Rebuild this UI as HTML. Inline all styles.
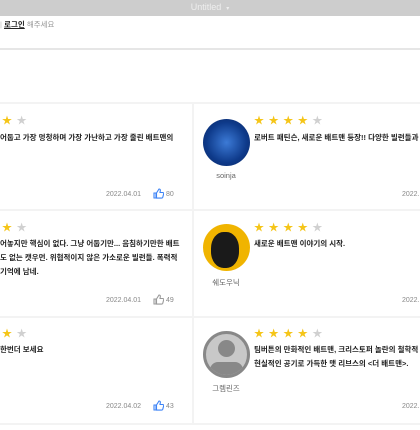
<!DOCTYPE html>
<html><head><meta charset="utf-8"><style>
*{margin:0;padding:0;box-sizing:border-box}
body{width:420px;height:430px;overflow:hidden;background:#fff;font-family:"Liberation Sans","Noto Sans CJK KR",sans-serif;position:relative}
.a{position:absolute;white-space:nowrap}
.bar{left:0;top:0;width:420px;height:16px;background:#cdcdcd;color:#eee;font-size:9px;text-align:center;line-height:14px}
.st{font-size:10px;letter-spacing:4.6px;color:#f5c518;line-height:12px}
.st i{font-style:normal;color:#d0d0d0}
.tx{font-size:7.5px;color:#222;font-weight:bold;line-height:14px}
.dt{font-size:7px;color:#888}
.nm{font-size:7.5px;color:#666;text-align:center;width:46px}
.hl{left:0;width:420px;height:2px;background:#f3f3f3}
.av{width:47px;height:47px;border-radius:50%;left:203px;overflow:hidden}
</style></head><body>
<div class="a bar">Untitled &nbsp;<span style="font-size:6px">▾</span></div>
<div class="a" style="left:0;top:19px;font-size:7.5px;color:#999"><span style="color:#bbb">|</span> <b style="color:#222;text-decoration:underline">로그인</b> 해주세요</div>
<div class="a" style="left:0;top:48px;width:420px;height:2px;background:#e6e6e6"></div>
<div class="a hl" style="top:102px"></div>
<div class="a hl" style="top:209px"></div>
<div class="a hl" style="top:316px"></div>
<div class="a hl" style="top:423px"></div>
<div class="a" style="left:192px;top:103px;width:2px;height:322px;background:#f3f3f3"></div>

<!-- row1 -->
<div class="a st" style="left:2px;top:116px">★<i>★</i></div>
<div class="a tx" style="left:0;top:131px">어둡고 가장 멍청하며 가장 가난하고 가장 줄린 배트맨의</div>
<div class="a dt" style="left:106px;top:191px">2022.04.01</div>
<svg class="a" style="left:153px;top:188px" width="11" height="11" viewBox="0 0 11 11"><path d="M1 5h2v5H1zM3.5 5L6 1c1 0 1.5.7 1.3 1.8L7 4.5h2.6c.8 0 1.3.6 1.1 1.3l-1 3.6c-.2.5-.6.7-1.1.7H3.5z" fill="none" stroke="#3b82f6" stroke-width="1.1"/></svg>
<div class="a dt" style="left:166px;top:191px">80</div>
<div class="a av" style="top:119px;background:radial-gradient(circle at 50% 50%,#3c7ad6,#0e3a8a 60%,#0a2560)"></div>
<div class="a nm" style="left:203px;top:171px">soinja</div>
<div class="a st" style="left:254px;top:116px">★★★★<i>★</i></div>
<div class="a tx" style="left:254px;top:131px">로버트 패틴슨, 새로운 배트맨 등장!! 다양한 빌런들과</div>
<div class="a dt" style="left:402px;top:191px">2022.</div>

<!-- row2 -->
<div class="a st" style="left:2px;top:223px">★<i>★</i></div>
<div class="a tx" style="left:0;top:237px">어놓지만 핵심이 없다. 그냥 어둡기만... 음침하기만한 배트<br>도 없는 캣우먼. 위협적이지 않은 가소로운 빌런들. 폭력적<br>기억에 남네.</div>
<div class="a dt" style="left:106px;top:297px">2022.04.01</div>
<svg class="a" style="left:153px;top:294px" width="11" height="11" viewBox="0 0 11 11"><path d="M1 5h2v5H1zM3.5 5L6 1c1 0 1.5.7 1.3 1.8L7 4.5h2.6c.8 0 1.3.6 1.1 1.3l-1 3.6c-.2.5-.6.7-1.1.7H3.5z" fill="none" stroke="#999" stroke-width="1.1"/></svg>
<div class="a dt" style="left:166px;top:297px">49</div>
<div class="a av" style="top:224px;background:#f0b400"><div style="position:absolute;left:8px;top:8px;width:28px;height:36px;border-radius:45%;background:#1a1a1a"></div></div>
<div class="a nm" style="left:203px;top:277px">쉐도우닉</div>
<div class="a st" style="left:254px;top:223px">★★★★<i>★</i></div>
<div class="a tx" style="left:254px;top:237px">새로운 배트맨 이야기의 시작.</div>
<div class="a dt" style="left:402px;top:297px">2022.</div>

<!-- row3 -->
<div class="a st" style="left:2px;top:329px">★<i>★</i></div>
<div class="a tx" style="left:0;top:343px">한번더 보세요</div>
<div class="a dt" style="left:106px;top:403px">2022.04.02</div>
<svg class="a" style="left:153px;top:400px" width="11" height="11" viewBox="0 0 11 11"><path d="M1 5h2v5H1zM3.5 5L6 1c1 0 1.5.7 1.3 1.8L7 4.5h2.6c.8 0 1.3.6 1.1 1.3l-1 3.6c-.2.5-.6.7-1.1.7H3.5z" fill="none" stroke="#3b82f6" stroke-width="1.1"/></svg>
<div class="a dt" style="left:166px;top:403px">43</div>
<div class="a av" style="top:331px;background:#c8c8c8;border:3px solid #888">
<div style="position:absolute;left:12px;top:6px;width:17px;height:17px;border-radius:50%;background:#888"></div>
<div style="position:absolute;left:4px;top:28px;width:33px;height:16px;border-radius:8px 8px 0 0;background:#888"></div></div>
<div class="a nm" style="left:203px;top:383px">그렘린즈</div>
<div class="a st" style="left:254px;top:329px">★★★★<i>★</i></div>
<div class="a tx" style="left:254px;top:343px">팀버튼의 만화적인 배트맨, 크리스토퍼 놀란의 철학적<br>현실적인 공기로 가득한 맷 리브스의 &lt;더 배트맨&gt;.</div>
<div class="a dt" style="left:402px;top:403px">2022.</div>
</body></html>
